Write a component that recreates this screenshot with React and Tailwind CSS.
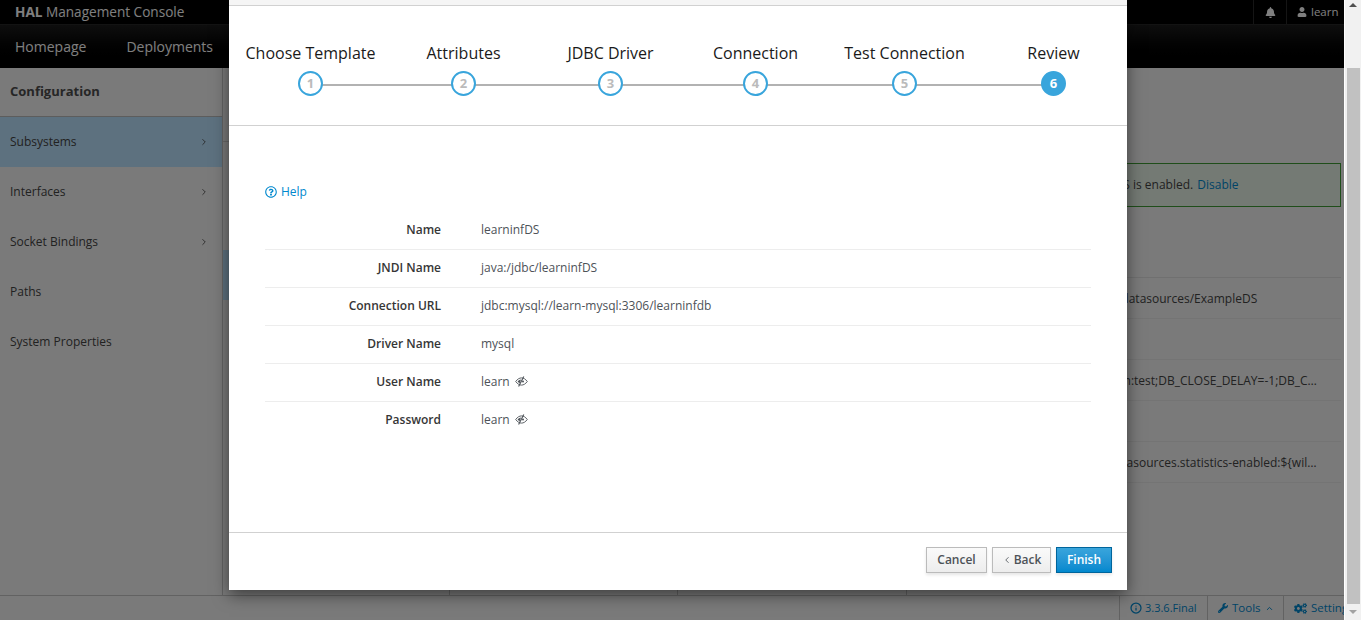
import React from "react";
import { ChevronRight, ChevronLeft, ChevronUp, Info } from "lucide-react";
import { FaBell, FaUser, FaWrench, FaCogs, FaRegQuestionCircle, FaCaretDown } from "react-icons/fa";

const menu = [
  { name: "Subsystems", arrow: true, active: true },
  { name: "Interfaces", arrow: true },
  { name: "Socket Bindings", arrow: true },
  { name: "Paths" },
  { name: "System Properties" },
];

const attributes = [
  { label: "JNDI Name", value: "java:/jboss/datasources/ExampleDS" },
  { label: "Driver", value: "" },
  { label: "Connection URL", value: "jdbc:h2:mem:test;DB_CLOSE_DELAY=-1;DB_CLOSE_ON_EXIT=FALSE" },
  { label: "Enabled", value: "" },
  { label: "Statistics", value: "${wildfly.datasources.statistics-enabled:${wildfly.statistics-enabled:false}}" },
];

const steps = [
  { name: "Choose Template", width: "w-[155px]" },
  { name: "Attributes", width: "w-[151px]" },
  { name: "JDBC Driver", width: "w-[143px]" },
  { name: "Connection", width: "w-[147px]" },
  { name: "Test Connection", width: "w-[151px]" },
  { name: "Review", width: "w-[147px]" },
];

const review = [
  { label: "Name", value: "learninfDS" },
  { label: "JNDI Name", value: "java:/jdbc/learninfDS" },
  { label: "Connection URL", value: "jdbc:mysql://learn-mysql:3306/learninfdb" },
  { label: "Driver Name", value: "mysql" },
  { label: "User Name", value: "learn", secret: true },
  { label: "Password", value: "learn", secret: true },
];

// slash runs bottom-left to top-right, over an outlined eye
const EyeSlash = () => (
  <svg width="13" height="11" viewBox="0 0 13 11" className="shrink-0 ml-[1px]">
    <path
      d="M0.7 5.5C2.5 3 4.5 1.9 6.5 1.9C8.5 1.9 10.5 3 12.3 5.5C10.5 8 8.5 9.1 6.5 9.1C4.5 9.1 2.5 8 0.7 5.5Z"
      fill="none"
      stroke="#4d5258"
      strokeWidth="0.9"
    />
    <path d="M2.6 5.5C3.4 4.4 4.6 3.6 6 3.4L4.6 7.2C3.8 6.9 3.2 6.3 2.6 5.5Z" fill="#4d5258" />
    <circle cx="8" cy="5.5" r="1" fill="#4d5258" />
    <path d="M3.6 10.5L8.8 0.6" stroke="#4d5258" strokeWidth="1.1" />
  </svg>
);

const Background = () => (
  <div className="h-full flex flex-col bg-[#f5f5f5]">
    <header className="h-6 shrink-0 bg-black flex items-center text-white">
      <div className="pl-[15px] flex-1 text-[13.6px]">
        <span className="font-bold">HAL</span> Management Console
      </div>
      <div className="h-full w-[33px] border-l border-[#2a2a2a] flex items-center justify-center">
        <FaBell size={11} />
      </div>
      <div className="h-full w-[58px] border-l border-[#2a2a2a] flex items-center pl-[10px] gap-1 text-[11.5px] overflow-hidden">
        <FaUser size={10} className="shrink-0" />
        <span>learn</span>
        <FaCaretDown size={10} className="shrink-0" />
      </div>
    </header>
    <nav className="h-11 shrink-0 bg-gradient-to-b from-[#1c1c1c] to-black border-t border-[#262626] flex items-center gap-[40px] pl-[15px] text-[14px] text-white">
      <span>Homepage</span>
      <span>Deployments</span>
      <span>Configuration</span>
      <span>Runtime</span>
      <span>Access Control</span>
    </nav>

    <div className="flex-1 min-h-0 flex">
      <aside className="w-[223px] shrink-0 border-r border-[#c4c4c4] text-[12px] text-[#444]">
        <h2 className="h-[49px] flex items-center pl-[10px] text-[13px] font-bold text-[#4d4d4d] border-b border-[#bbb]">
          Configuration
        </h2>
        {menu.map((item) => (
          <div
            key={item.name}
            className={`h-[50px] flex items-center justify-between pl-[10px] pr-[13px] ${item.active ? "bg-[#bbe2ff]" : ""}`}
          >
            {item.name}
            {item.arrow && <ChevronRight size={10} strokeWidth={2} />}
          </div>
        ))}
      </aside>
      <div className="w-[227px] shrink-0 border-r border-[#c4c4c4]">
        <div className="h-[74px] border-b border-[#d1d1d1]" />
        <div className="h-[108px]" />
        <div className="h-[50px] bg-[#bbe2ff]" />
      </div>
      <div className="w-[228px] shrink-0 border-r border-[#c4c4c4]" />
      <div className="w-[229px] shrink-0 border-r border-[#c4c4c4]" />
      <section className="flex-1 min-w-0 pl-5 pr-[3px] pt-[95px] text-[12px] text-[#444]">
        <div className="h-[44px] border border-[#3f9c35] bg-[#e9f4e9] flex items-center pl-[67px] whitespace-nowrap">
          Statistics for ExampleDS is enabled.&nbsp;
          <span className="ml-px text-[#0088ce]">Disable</span>
        </div>
        <div className="mt-[70px] border-t border-[#e0e0e0]">
          {attributes.map((row) => (
            <div key={row.label} className="h-[41px] pt-[2px] border-b border-[#e8e8e8] flex items-center">
              <div className="w-[131px] shrink-0 font-semibold">{row.label}</div>
              <div className="w-[264px] truncate">{row.value}</div>
            </div>
          ))}
        </div>
      </section>
    </div>

    <footer className="h-[25px] shrink-0 border-t border-[#c4c4c4] flex justify-end text-[11.5px] text-[#0088ce] overflow-hidden">
      <div className="w-[88px] shrink-0 border-l border-[#c4c4c4] flex items-center pl-[10px] gap-[3px] text-[11px]">
        <Info size={12} strokeWidth={2.5} /> 3.3.6.Final
      </div>
      <div className="w-[76px] shrink-0 border-l border-[#c4c4c4] flex items-center pl-[10px] gap-1">
        <FaWrench size={10} /> Tools <ChevronUp size={9} strokeWidth={2.5} />
      </div>
      <div className="w-[61px] shrink-0 border-l border-[#c4c4c4] flex items-center pl-[10px] gap-1 whitespace-nowrap">
        <FaCogs size={13} className="shrink-0" /> Settings
      </div>
    </footer>
  </div>
);

const Wizard = () => (
  <div className="absolute left-[229px] top-0 w-[898px] h-[590px] bg-white flex flex-col shadow-[0_5px_15px_rgba(0,0,0,0.5)] overflow-hidden">
    <div className="h-[6px] shrink-0 bg-[#f5f5f5] border-b border-[#d1d1d1]" />

    <div className="h-[120px] shrink-0 border-b border-[#d1d1d1] flex pl-1 pt-9">
      {steps.map((step, idx) => {
        const last = idx === steps.length - 1;
        return (
          <div key={step.name} className={`${step.width} shrink-0 relative flex flex-col items-center`}>
            <div className="text-[16px] leading-[22px] text-[#1a1a1a] whitespace-nowrap">{step.name}</div>
            {!last && <div className="absolute left-1/2 top-[42px] h-[2px] w-[calc(100%+4px)] bg-[#b2b2b2]" />}
            <div
              className={`relative mt-[7px] w-[25px] h-[25px] rounded-full border-[2.5px] border-[#39a5dc] flex items-center justify-center text-[13px] font-bold ${
                last ? "bg-[#39a5dc] text-white" : "bg-white text-[#bbb]"
              }`}
            >
              {idx + 1}
            </div>
          </div>
        );
      })}
    </div>

    <div className="flex-1 min-h-0 px-9 pt-[57px]">
      <div className="h-[18px] mb-[11px] flex items-center gap-1 text-[12px] text-[#0088ce]">
        <FaRegQuestionCircle size={12} /> Help
      </div>
      {review.map((row, idx) => (
        <div
          key={row.label}
          className={`h-[38px] pb-[2px] flex items-center gap-10 text-[12px] border-b ${idx < review.length - 1 ? "border-[#ededed]" : "border-transparent"}`}
        >
          <div className="w-[176px] text-right font-semibold text-[#363636]">{row.label}</div>
          <div className="flex items-center gap-[4px] text-[#4d5258]">
            {row.value}
            {row.secret && <EyeSlash />}
          </div>
        </div>
      ))}
    </div>

    <div className="h-[58px] shrink-0 border-t border-[#d1d1d1] flex items-start justify-end gap-[5px] pt-[14px] pr-[15px] text-[12px] font-semibold">
      <button className="w-[61px] h-[26px] border border-[#bbb] bg-gradient-to-b from-[#fafafa] to-[#ededed] text-[#4d5258] shadow-[0_2px_3px_rgba(3,3,3,0.1)]">
        Cancel
      </button>
      <button className="w-[59px] h-[26px] border border-[#bbb] bg-gradient-to-b from-[#fafafa] to-[#ededed] text-[#4d5258] shadow-[0_2px_3px_rgba(3,3,3,0.1)] flex items-center justify-center gap-[2px]">
        <ChevronLeft size={10} strokeWidth={2} /> Back
      </button>
      <button className="w-[56px] h-[26px] border border-[#00659c] bg-gradient-to-b from-[#39a5dc] to-[#0088ce] text-white shadow-[0_2px_3px_rgba(3,3,3,0.1)]">
        Finish
      </button>
    </div>
  </div>
);

const Scrollbar = () => (
  <div className="w-[17px] shrink-0 bg-[#f1f1f1] border-l border-white flex flex-col items-center">
    <div className="h-[68px] w-full flex justify-center pt-[3px]">
      <div className="w-0 h-0 border-x-[4px] border-x-transparent border-b-[4px] border-b-[#505050]" />
    </div>
    <div className="w-[13px] h-[536px] bg-[#c1c1c1]" />
    <div className="flex-1 w-full flex justify-center items-center">
      <div className="w-0 h-0 border-x-[4px] border-x-transparent border-t-[4px] border-t-[#a3a3a3]" />
    </div>
  </div>
);

export default function App() {
  return (
    <div className="h-[620px] w-full flex overflow-hidden font-['Open_Sans',sans-serif]">
      <div className="relative flex-1 min-w-0">
        <Background />
        <div className="absolute inset-0 bg-black/50" />
        <Wizard />
      </div>
      <Scrollbar />
    </div>
  );
}
